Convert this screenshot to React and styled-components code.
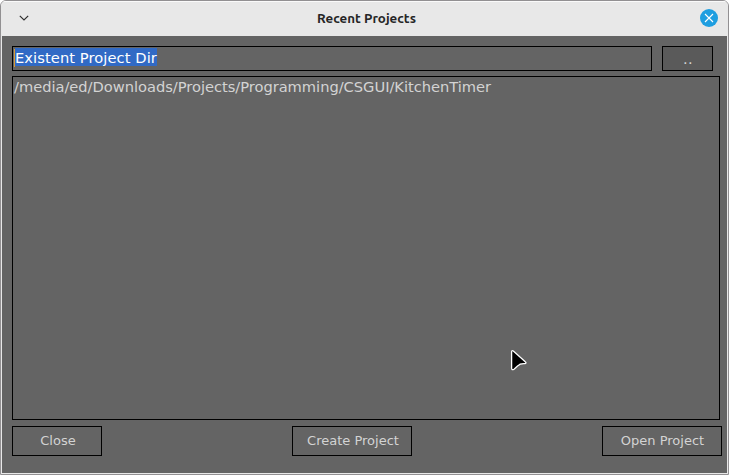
import React from "react";
import styled, { createGlobalStyle } from "styled-components";

const GlobalStyle = createGlobalStyle`
  * { box-sizing: border-box; }
  body { margin: 0; background: #fff; overflow: hidden; }
`;

const Window = styled.main`
  position: relative;
  display: flex;
  flex-direction: column;
  width: 729px;
  height: 475px;
  border: 1px solid #929092;
  border-radius: 6px 6px 0 0;
  background: #e8e8e8;
  padding: 0 1px 1px;
  overflow: hidden;
  font-family: "DejaVu Sans", sans-serif;
  color: #d3d3d3;
`;

const TitleBar = styled.header`
  display: grid;
  grid-template-columns: 44px 1fr 44px;
  align-items: center;
  height: 35px;
  flex: none;
  margin: 0 -1px;
  padding-bottom: 2px;
  border-top: 1px solid #fafafa;
  background: #e8e8e8;
`;

const WindowMenu = styled.svg`
  display: block;
  margin-left: 17px;
`;

const Title = styled.h1`
  margin: 0;
  padding: 2px 0 0 4px;
  text-align: center;
  font: 600 13.33px/18px Ubuntu, "Noto Sans", sans-serif;
  letter-spacing: 0.02px;
  color: #262626;
`;

const CloseIcon = styled.svg`
  display: block;
  margin-left: 16px;
`;

const Content = styled.section`
  display: flex;
  flex-direction: column;
  flex: 1;
  padding: 10px 5px 0 10px;
  background: #646464;
`;

const PathRow = styled.div`
  display: flex;
  gap: 10px;
`;

const PathField = styled.div`
  display: flex;
  width: 640px;
  height: 25px;
  padding: 1px;
  border: 1px solid #000;
  font-size: 14.67px;
  letter-spacing: 0.08px;
  line-height: 18px;
`;

const Caret = styled.span`
  width: 1px;
  height: 18px;
  margin-top: 1px;
  background: #d89b35;
`;

const Selection = styled.span`
  width: 142px;
  height: 18px;
  background: #316ac5;
  color: #fff;
  line-height: 20px;
  white-space: nowrap;
`;

const Button = styled.button`
  width: ${({ $width }) => $width}px;
  height: 30px;
  padding: 0 0 1px ${({ $shift }) => $shift || 0}px;
  border: 1px solid #000;
  background: #646464;
  color: #d3d3d3;
  font: 13px/18px "DejaVu Sans", sans-serif;
  white-space: nowrap;
`;

const BrowseButton = styled(Button)`
  height: 25px;
  padding: 1px 0 0 1px;
  background: #5a5a5a;
  font-size: 14.67px;
  letter-spacing: 0.4px;
`;

const ProjectList = styled.ul`
  width: 708px;
  height: 344px;
  margin: 5px 0 6px;
  padding: 1px;
  border: 1px solid #000;
  list-style: none;
  font-size: 14.67px;
  letter-spacing: -0.025px;
  line-height: 18px;
`;

const Actions = styled.footer`
  display: flex;
  justify-content: space-between;
  width: 710px;
`;

const Pointer = styled.svg`
  position: absolute;
  left: 507px;
  top: 347px;
`;

export default function App() {
  return (
    <>
      <GlobalStyle />
      <Window>
        <TitleBar>
          <WindowMenu width="12" height="12" viewBox="0 0 12 12" fill="none" stroke="#333" strokeWidth="1.2">
            <path d="M1.8 3.8 6 8l4.2-4.2" />
          </WindowMenu>
          <Title>Recent Projects</Title>
          <CloseIcon width="18" height="18" viewBox="0 0 18 18">
            <circle cx="9" cy="9" r="9" fill="#1e9ee0" />
            <path d="m5 5 8 8m0-8-8 8" stroke="#fff" strokeWidth="1.1" />
          </CloseIcon>
        </TitleBar>
        <Content>
          <PathRow>
            <PathField><Caret /><Selection>Existent Project Dir</Selection></PathField>
            <BrowseButton $width={51}>..</BrowseButton>
          </PathRow>
          <ProjectList>
            <li>/media/ed/Downloads/Projects/Programming/CSGUI/KitchenTimer</li>
          </ProjectList>
          <Actions>
            <Button $width={90} $shift={2}>Close</Button>
            <Button $width={120} $shift={2}>Create Project</Button>
            <Button $width={120} $shift={1}>Open Project</Button>
          </Actions>
        </Content>
        <Pointer width="20" height="24" viewBox="0 0 20 24">
          <path d="M3.6 4Q3.6 2 5.3 3L17 13.4Q19 15 17 15.6 12 15.2 9.8 17.8L6 21.2Q3.6 22.5 3.6 20Z" fill="#000" stroke="#fff" strokeWidth="1.3" strokeLinejoin="round" />
        </Pointer>
      </Window>
    </>
  );
}
